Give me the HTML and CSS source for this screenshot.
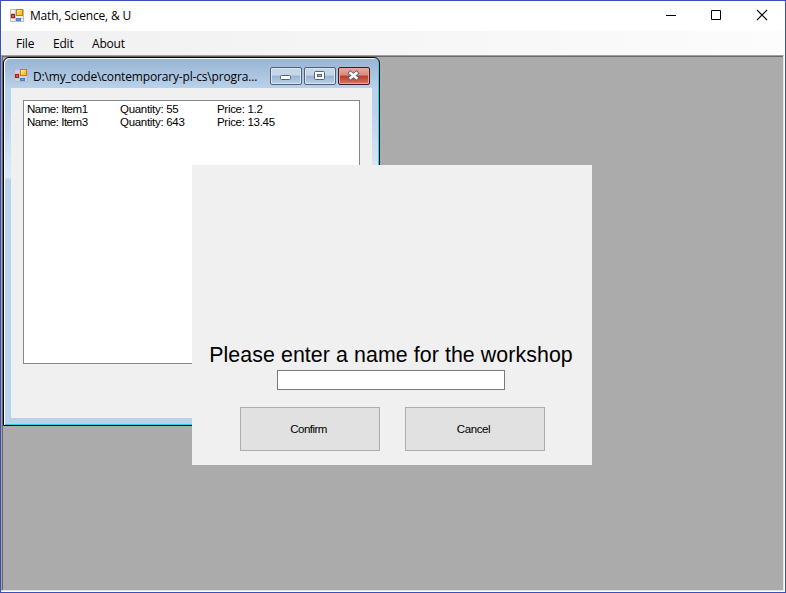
FILE: index.html
```html
<!DOCTYPE html>
<html lang="en">
<head>
<meta charset="utf-8">
<title>Math, Science, &amp; U</title>
<link rel="stylesheet" href="styles.css">
</head>
<body>
<svg width="0" height="0" class="defs" aria-hidden="true">
  <defs>
    <linearGradient id="gold" x1="0" y1="0" x2="1" y2="1"><stop offset="0" stop-color="#fff6b5"/><stop offset=".5" stop-color="#fcd33d"/><stop offset="1" stop-color="#eeb000"/></linearGradient>
    <linearGradient id="blue" x1="0" y1="0" x2="0" y2="1"><stop offset="0" stop-color="#a5cdfb"/><stop offset="1" stop-color="#2b68cb"/></linearGradient>
    <symbol id="form-icon" viewBox="0 0 14 14">
      <path d="M.5.5h13v12H.5z" fill="#e4e4e2" fill-opacity=".55" stroke="#b9b9b9"/>
      <path d="M.5 4.5h5M.5 9.5h13M5.5.5v12" stroke="#c9c9c9" fill="none"/>
      <rect x="6.5" y=".5" width="6" height="6" fill="url(#gold)" stroke="#b98613"/>
      <rect x="1.5" y="5.5" width="3" height="3" fill="#e2563d" stroke="#a91e13"/>
      <rect x="6.5" y="9.5" width="4" height="2" fill="url(#blue)" stroke="#437fd1"/>
    </symbol>
  </defs>
</svg>
<div class="app">
  <header class="titlebar">
    <svg class="app-icon" width="14" height="14"><use href="#form-icon"/></svg>
    <span class="app-title">Math, Science, &amp; U</span>
    <svg class="caption" width="102" height="12" viewBox="0 0 102 12" fill="none" stroke="#000">
      <path d="M0 6.5h10M45.5 1.5h9v9h-9z"/><path d="M91 1l10 10M101 1L91 11" stroke-width="1.1"/>
    </svg>
  </header>
  <nav class="menu"><span class="file">File</span><span class="edit">Edit</span><span class="about">About</span></nav>
  <main class="workspace">
    <section class="child">
      <div class="child-bar">
        <svg class="child-icon" width="14" height="14"><use href="#form-icon"/></svg>
        <span class="child-title">D:\my_code\contemporary-pl-cs\progra...</span>
        <div class="child-buttons">
          <button class="glass"><svg width="32" height="18"><rect x="10.5" y="8.5" width="10" height="4" rx="1" fill="#fff" stroke="#53637c"/></svg></button>
          <button class="glass"><svg width="32" height="18"><rect x="10.5" y="4.5" width="10" height="8" rx="1" fill="#fff" stroke="#53637c"/><rect x="13.5" y="7.5" width="4" height="2" fill="#a9bdd7" stroke="#53637c"/></svg></button>
          <button class="glass close"><svg width="32" height="18"><path d="M12.5 6l6 5M18.5 6l-6 5" stroke="#59607a" stroke-width="4.2" stroke-linecap="square"/><path d="M12.5 6l6 5M18.5 6l-6 5" stroke="#fff" stroke-width="2.4" stroke-linecap="square"/></svg></button>
        </div>
      </div>
      <div class="child-client">
        <div class="list">
          <div class="row"><span>Name: Item1</span><span>Quantity: 55</span><span>Price: 1.2</span></div>
          <div class="row"><span>Name: Item3</span><span>Quantity: 643</span><span>Price: 13.45</span></div>
        </div>
      </div>
    </section>
    <section class="dialog">
      <label class="prompt" for="name">Please enter a name for the workshop</label>
      <input id="name" class="field" type="text">
      <div class="actions"><button>Confirm</button><button>Cancel</button></div>
    </section>
  </main>
</div>
</body>
</html>
```
FILE: styles.css
```css
* { box-sizing: border-box; }
body { margin: 0; overflow: hidden; color: #000; font: 12px/16px "Open Sans", sans-serif; }
.defs { position: absolute; }
.app { width: 786px; height: 593px; border: 1px solid #384fbd; display: flex; flex-direction: column; background: #fff; }
.titlebar { height: 30px; display: flex; align-items: center; padding: 0 17px 0 9px; white-space: nowrap; }
.app-icon { margin-right: 6px; margin-top: -1px; }
.app-title { letter-spacing: -.17px; }
.caption { margin-left: auto; margin-top: -2px; }
.menu { height: 24px; display: flex; align-items: center; padding-left: 15px; background: linear-gradient(90deg, #f0f0f0, #fcfcfc); }
.file { width: 37px; letter-spacing: -.2px; }
.edit { width: 39px; letter-spacing: -.2px; }
.about { letter-spacing: -.2px; }
.menu span { padding-top: 1px; }
.workspace { flex: 1; margin: 0 1px 1px 0; position: relative; background: #ababab; border: 1px solid #a0a0a0; border-right-color: #e3e3e3; border-bottom-color: #e3e3e3; box-shadow: inset 1px 1px #696969, 1px 1px #fff; }
.child { position: absolute; left: 1px; top: 1px; width: 377px; height: 369px; border: 1px solid #000; border-radius: 6px 6px 0 0; padding: 0 7px 7px 7px; display: flex; flex-direction: column; box-shadow: inset 1px 1px #fff, inset -1px -1px #25d3ec; background: linear-gradient(#98b4d3 0, #b9d1ea 30px, #b9d1ea 50px, #dcebfa 119px, #b9d1ea 122px); }
.child-bar { height: 30px; display: flex; align-items: center; padding: 6px 2px 0 3px; white-space: nowrap; }
.child-icon { margin-right: 5px; }
.child-title { letter-spacing: -.165px; padding-top: 1px; }
.child-buttons { display: flex; gap: 2px; margin-left: auto; }
.glass { width: 32px; height: 18px; padding: 0; border: 1px solid #535f75; border-radius: 2px; background: linear-gradient(#c5d6e9 0 45%, #98b3d0 50%, #b9d2ec); box-shadow: inset 0 0 0 1px #d6e6f6; }
.glass svg { display: block; margin: -1px; }
.close { border-color: #431922; background: linear-gradient(#e8aca2 0, #d8877a 45%, #b83a25 50%, #d87964); box-shadow: inset 0 0 0 1px #e6a69b; }
.child-client { flex: 1; background: #f0f0f0; padding: 12px 12px 54px; display: flex; }
.list { flex: 1; background: #fff; border: 1px solid #828790; padding: 2px 3px; font: 11.5px/13px "Liberation Sans", sans-serif; letter-spacing: -.3px; }
.row { display: grid; grid-template-columns: 93px 97px 1fr; }
.row span:first-child { letter-spacing: -.48px; }
.dialog { position: absolute; left: 190px; top: 109px; width: 400px; height: 300px; padding-top: 177px; background: #f0f0f0; display: flex; flex-direction: column; align-items: center; }
.prompt { font: 21.33px/26px "Liberation Sans", sans-serif; letter-spacing: .09px; white-space: nowrap; height: 28px; margin-left: -2px; }
.field { width: 228px; height: 20px; margin-right: 2px; border: 1px solid #7a7a7a; background: #fff; padding: 0; outline: 0; border-radius: 0; }
.actions { display: flex; gap: 25px; margin-top: 17px; }
.actions button { width: 140px; height: 44px; padding: 0 2px 0 0; border: 1px solid #adadad; background: #e1e1e1; color: #000; font: 11.5px "Liberation Sans", sans-serif; letter-spacing: -.55px; }
.actions button:last-child { letter-spacing: -.4px; }
```
